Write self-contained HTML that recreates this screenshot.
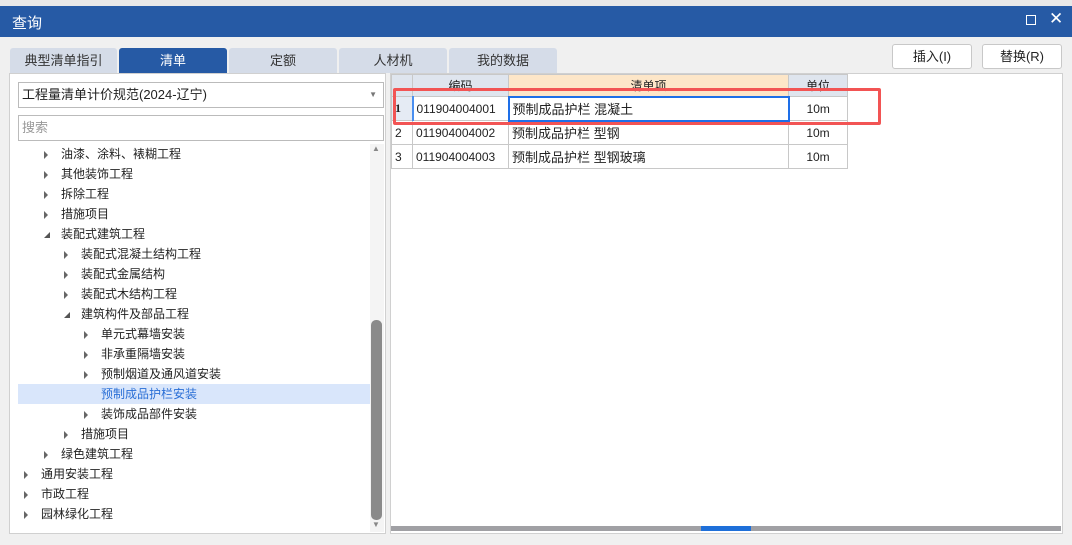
<!DOCTYPE html>
<html><head><meta charset="utf-8"><style>
*{box-sizing:border-box;margin:0;padding:0}
body{width:1072px;height:545px;background:#f0f0f0;font-family:"Liberation Sans","Noto Sans CJK SC",sans-serif;font-size:12px;color:#222;position:relative;overflow:hidden}
.abs{position:absolute}
.title{left:0;top:6px;width:1072px;height:31px;background:#265aa5;color:#fff;font-size:15px;padding:6px 0 0 12px}
.tab{top:48px;height:25px;background:#d5dce8;border-radius:3px 3px 0 0;text-align:center;line-height:25px;font-size:13px;color:#333}
.tab.on{background:#265aa5;color:#fff}
.btn{top:44px;height:25px;border:1px solid #c8c8c8;border-radius:3px;background:#fff;text-align:center;line-height:23px;font-size:13px}
.panel{background:#fff;border:1px solid #d0d0d0}
.row{position:absolute;height:20px;line-height:20px;font-size:12px;white-space:nowrap}
.tri{display:inline-block;width:0;height:0;border-left:4px solid #666;border-top:4px solid transparent;border-bottom:4px solid transparent;margin-right:13px;vertical-align:-1px}
.trid{display:inline-block;width:0;height:0;border-bottom:6px solid #555;border-left:6px solid transparent;margin-right:11px;vertical-align:0px}
table{border-collapse:collapse;position:absolute;left:391px;top:74px;font-size:12px}
td{border:1px solid #c8c8c8;height:24px;padding:0 3px;white-space:nowrap}
th{border:1px solid #c8c8c8;height:22px;font-weight:normal;background:#dfe5ee;font-size:12px}
</style></head><body>
<div class="abs" style="left:0;top:0;width:1072px;height:6px;background:#e8e8e8"></div>
<div class="abs title">查询</div>
<div class="abs" style="left:1026px;top:15px;width:10px;height:10px;border:1.5px solid #fff"></div>
<div class="abs" style="left:1049px;top:9px;color:#fff;font-size:17px">✕</div>
<div class="abs tab" style="left:10px;width:107px">典型清单指引</div>
<div class="abs tab on" style="left:119px;width:108px">清单</div>
<div class="abs tab" style="left:229px;width:108px">定额</div>
<div class="abs tab" style="left:339px;width:108px">人材机</div>
<div class="abs tab" style="left:449px;width:108px">我的数据</div>
<div class="abs btn" style="left:892px;width:80px">插入(I)</div>
<div class="abs btn" style="left:982px;width:80px">替换(R)</div>

<div class="abs panel" style="left:9px;top:73px;width:377px;height:461px"></div>
<div class="abs" style="left:18px;top:82px;width:366px;height:26px;border:1px solid #bbb;background:#fff;line-height:24px;padding-left:3px;font-size:13px">工程量清单计价规范(2024-辽宁)<span style="position:absolute;right:6px;top:0;color:#777;font-size:8px">▼</span></div>
<div class="abs" style="left:18px;top:115px;width:366px;height:26px;border:1px solid #bbb;background:#fff;line-height:24px;padding-left:3px;font-size:13px;color:#999">搜索</div>
<div class="abs" style="left:370px;top:144px;width:14px;height:388px;background:#f4f4f4"></div>
<div class="abs" style="left:372px;top:144px;color:#888;font-size:8px">▲</div>
<div class="abs" style="left:372px;top:520px;color:#888;font-size:8px">▼</div>
<div class="abs" style="left:371px;top:320px;width:11px;height:200px;background:#8a8a8a;border-radius:5px"></div>
<div class="abs" style="left:18px;top:384px;width:352px;height:20px;background:#d9e6fb"></div>
<div class="row" style="left:44px;top:144px"><span class="tri"></span>油漆、涂料、裱糊工程</div>
<div class="row" style="left:44px;top:164px"><span class="tri"></span>其他装饰工程</div>
<div class="row" style="left:44px;top:184px"><span class="tri"></span>拆除工程</div>
<div class="row" style="left:44px;top:204px"><span class="tri"></span>措施项目</div>
<div class="row" style="left:44px;top:224px"><span class="trid"></span>装配式建筑工程</div>
<div class="row" style="left:64px;top:244px"><span class="tri"></span>装配式混凝土结构工程</div>
<div class="row" style="left:64px;top:264px"><span class="tri"></span>装配式金属结构</div>
<div class="row" style="left:64px;top:284px"><span class="tri"></span>装配式木结构工程</div>
<div class="row" style="left:64px;top:304px"><span class="trid"></span>建筑构件及部品工程</div>
<div class="row" style="left:84px;top:324px"><span class="tri"></span>单元式幕墙安装</div>
<div class="row" style="left:84px;top:344px"><span class="tri"></span>非承重隔墙安装</div>
<div class="row" style="left:84px;top:364px"><span class="tri"></span>预制烟道及通风道安装</div>
<div class="row" style="left:101px;top:384px;color:#2a6fd6">预制成品护栏安装</div>
<div class="row" style="left:84px;top:404px"><span class="tri"></span>装饰成品部件安装</div>
<div class="row" style="left:64px;top:424px"><span class="tri"></span>措施项目</div>
<div class="row" style="left:44px;top:444px"><span class="tri"></span>绿色建筑工程</div>
<div class="row" style="left:24px;top:464px"><span class="tri"></span>通用安装工程</div>
<div class="row" style="left:24px;top:484px"><span class="tri"></span>市政工程</div>
<div class="row" style="left:24px;top:504px"><span class="tri"></span>园林绿化工程</div>

<div class="abs panel" style="left:390px;top:73px;width:673px;height:461px"></div>
<table>
<tr><th style="width:21px"></th><th style="width:96px">编码</th><th style="width:280px;background:#fde6c8">清单项</th><th style="width:59px">单位</th></tr>
<tr><td style="background:#e5ebf4;font-weight:bold;font-family:'Liberation Serif',serif;border-right:2px solid #4a8ff0">1</td><td>011904004001</td><td style="border:2px solid #1e6fe8;font-size:13px">预制成品护栏 混凝土</td><td style="text-align:center">10m</td></tr>
<tr><td>2</td><td>011904004002</td><td style="font-size:13px">预制成品护栏 型钢</td><td style="text-align:center">10m</td></tr>
<tr><td>3</td><td>011904004003</td><td style="font-size:13px">预制成品护栏 型钢玻璃</td><td style="text-align:center">10m</td></tr>
</table>
<div class="abs" style="left:393px;top:88px;width:488px;height:37px;border:3px solid #f25454;border-radius:2px"></div>
<div class="abs" style="left:391px;top:526px;width:670px;height:5px;background:#a0a0a4"></div>
<div class="abs" style="left:701px;top:526px;width:50px;height:5px;background:#1e6fd9"></div>
</body></html>
